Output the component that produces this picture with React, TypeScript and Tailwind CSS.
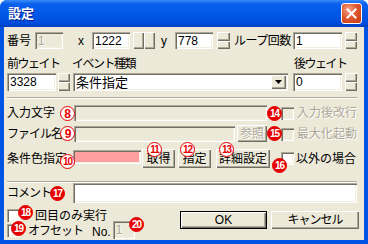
import React from 'react'

const FONT = "font-['Liberation_Sans','Noto_Sans_CJK_JP',sans-serif]"
const SUNKEN = 'shadow-[inset_1px_1px_0_#aca899,inset_2px_2px_0_#716f64,inset_-1px_-1px_0_#fff,inset_-2px_-2px_0_#f1efe2]'
const RAISED = 'shadow-[inset_1px_1px_0_#fff,inset_-1px_-1px_0_#716f64,inset_-2px_-2px_0_#aca899]'
const DIS = 'text-[#aca899] [text-shadow:1px_1px_0_#fff]'

function Num({ n, filled, className }: { n: number; filled?: boolean; className: string }) {
  return (
    <span
      className={`absolute z-10 flex items-center justify-center w-[15px] h-[15px] rounded-full border-[1.5px] border-[#e60000] font-bold leading-none ${
        n > 9 ? 'text-[10px] tracking-[-1px]' : 'text-[12px]'
      } ${filled ? 'bg-[#e60000] text-white' : 'bg-white text-[#e60000]'} ${className}`}
    >
      {n}
    </span>
  )
}

function Input({ value, disabled, className }: { value?: string; disabled?: boolean; className: string }) {
  return (
    <div className={`${SUNKEN} ${disabled ? `bg-[#ece9d8] ${DIS}` : 'bg-white'} flex items-center pl-[3px] ${className}`}>
      {value}
    </div>
  )
}

function VSpin({ className }: { className: string }) {
  return (
    <div className={`flex flex-col ${className}`}>
      <div className={`flex-1 bg-[#ece9d8] ${RAISED}`} />
      <div className={`flex-1 bg-[#ece9d8] ${RAISED}`} />
    </div>
  )
}

function Btn({ children, disabled, className }: { children: React.ReactNode; disabled?: boolean; className: string }) {
  return (
    <div className={`relative bg-[#ece9d8] ${RAISED} flex items-center justify-center ${disabled ? DIS : ''} ${className}`}>
      {children}
    </div>
  )
}

function Check({ disabled }: { disabled?: boolean }) {
  return <div className={`w-[13px] h-[13px] shrink-0 ${SUNKEN} ${disabled ? 'bg-[#ece9d8]' : 'bg-white'}`} />
}

export default function App() {
  return (
    <div className={`w-[368px] h-[244px] flex flex-col ${FONT} text-[12px] leading-none text-black bg-[#0054e3] rounded-t-[7px] overflow-hidden`}>
      <div className="h-[27px] shrink-0 flex items-center pl-[8px] pr-[6px] bg-[linear-gradient(180deg,#3a8df9_0%,#0b60ee_14%,#0056e6_55%,#004ddc_85%,#003fc4_100%)]">
        <span className="text-white font-bold text-[13px] [text-shadow:1px_1px_0_#0a1e8c]">設定</span>
        <div className="ml-auto w-[21px] h-[21px] rounded-[3px] border border-white bg-[radial-gradient(circle_at_35%_30%,#f4a58c_0%,#e0582f_45%,#c13a12_100%)] flex items-center justify-center">
          <svg width="11" height="11" viewBox="0 0 11 11">
            <path d="M1.5 1.5 L9.5 9.5 M9.5 1.5 L1.5 9.5" stroke="#fff" strokeWidth="2" strokeLinecap="square" />
          </svg>
        </div>
      </div>

      <div className="flex-1 mx-[4px] mb-[4px] bg-[#ece9d8] flex flex-col pl-[3px]">
        {/* row 1 */}
        <div className="mt-[5px] h-[17px] flex items-stretch">
          <span className="w-[28px] flex items-center">番号</span>
          <Input value="1" disabled className="w-[28px]" />
          <span className="w-[29px] pl-[15px] flex items-center">x</span>
          <Input value="1222" className="w-[38px]" />
          <div className="ml-[3px] w-[22px] flex">
            <div className={`flex-1 bg-[#ece9d8] ${RAISED}`} />
            <div className={`flex-1 bg-[#ece9d8] ${RAISED}`} />
          </div>
          <span className="w-[20px] pl-[6px] flex items-center">y</span>
          <Input value="778" className="w-[38px]" />
          <VSpin className="ml-[4px] w-[13px]" />
          <span className="ml-[4px] w-[59px] flex items-center tracking-[-0.5px]">ループ回数</span>
          <Input value="1" className="w-[49px]" />
          <VSpin className="ml-[3px] w-[12px]" />
        </div>

        {/* row 2 labels */}
        <div className="mt-[7px] h-[15px] flex items-center">
          <span className="w-[65px] tracking-[-1.5px]">前ウェイト</span>
          <span className="w-[222px] tracking-[-1.5px]">イベント種類</span>
          <span className="tracking-[-1.5px]">後ウェイト</span>
        </div>
        {/* row 2 inputs */}
        <div className="mt-[2px] h-[18px] flex items-stretch">
          <Input value="3328" className="w-[49px]" />
          <VSpin className="ml-[2px] w-[12px]" />
          <div className={`ml-[3px] w-[215px] bg-white ${SUNKEN} flex items-center pl-[3px] pr-[2px]`}>
            <span className="text-[13px]">条件指定</span>
            <div className={`ml-auto w-[15px] h-[14px] bg-[#ece9d8] ${RAISED} flex items-center justify-center`}>
              <svg width="7" height="4" viewBox="0 0 7 4">
                <path d="M0 0 H7 L3.5 4 Z" fill="#000" />
              </svg>
            </div>
          </div>
          <Input value="0" className="ml-[5px] w-[49px]" />
          <VSpin className="ml-[3px] w-[12px]" />
        </div>

        <div className="mt-[6px] w-[350px] h-[2px] border-t border-[#aca899] border-b border-b-white" />

        {/* 入力文字 */}
        <div className="mt-[6px] h-[16px] flex items-stretch">
          <span className="relative w-[67px] flex items-center">
            入力文字
            <Num n={8} className="left-[53px] top-[1px]" />
          </span>
          <Input disabled className="w-[193px]" />
          <div className="relative ml-[14px] flex items-center">
            <Num n={14} filled className="-left-[14px] top-[1px]" />
            <Check disabled />
            <span className={`ml-[3px] ${DIS}`}>入力後改行</span>
          </div>
        </div>

        {/* ファイル名 */}
        <div className="mt-[5px] h-[16px] flex items-stretch">
          <span className="relative w-[67px] flex items-center tracking-[-1px]">
            ファイル名
            <Num n={9} className="left-[53px] top-[0px]" />
          </span>
          <Input disabled className="w-[161px]" />
          <Btn disabled className="ml-[2px] w-[30px] -mt-[1px]">参照</Btn>
          <div className="relative ml-[14px] flex items-center">
            <Num n={15} filled className="-left-[14px] top-[0px]" />
            <Check disabled />
            <span className={`ml-[3px] ${DIS}`}>最大化起動</span>
          </div>
        </div>

        {/* 条件色指定 */}
        <div className="mt-[7px] h-[19px] flex items-start">
          <span className="relative w-[66px] h-[19px] flex items-center whitespace-nowrap">
            条件色指定
            <Num n={10} className="left-[53px] top-[5px]" />
          </span>
          <div className={`mt-[1px] w-[68px] h-[14px] bg-[#ff9f9f] ${SUNKEN}`} />
          <Btn className="ml-[1px] w-[33px] h-[19px]">
            取得
            <Num n={11} className="left-[5px] -top-[7px]" />
          </Btn>
          <Btn className="ml-[3px] w-[33px] h-[19px]">
            指定
            <Num n={12} className="left-[2px] -top-[7px]" />
          </Btn>
          <Btn className="ml-[5px] w-[54px] h-[19px]">
            詳細設定
            <Num n={13} className="left-[3px] -top-[7px]" />
          </Btn>
          <div className="relative ml-[11px] h-[19px] flex items-center">
            <Num n={16} filled className="-left-[9px] top-[9px]" />
            <Check />
            <span className="ml-[2px]">以外の場合</span>
          </div>
        </div>

        <div className="mt-[13px] w-[350px] h-[2px] border-t border-[#aca899] border-b border-b-white" />

        {/* コメント */}
        <div className="h-[20px] flex items-stretch">
          <span className="relative w-[66px] flex items-center tracking-[-1px]">
            コメント
            <Num n={17} filled className="left-[43px] top-[3px]" />
          </span>
          <Input className="w-[284px]" />
        </div>

        {/* bottom */}
        <div className="flex">
          <div className="w-[173px] flex flex-col">
            <div className="relative mt-[6px] h-[13px] flex items-center">
              <Check />
              <Num n={18} filled className="left-[11px] -top-[4px]" />
              <span className="ml-[15px]">回目のみ実行</span>
            </div>
            <div className="relative mt-[2px] h-[13px] flex items-center">
              <Check />
              <Num n={19} filled className="left-[4px] -top-[3px]" />
              <span className="ml-[8px] tracking-[-1px]">オフセット</span>
              <span className="ml-[9px] mt-[2px]">No.</span>
              <Input disabled value="1" className="relative ml-[2px] w-[22px] h-[18px] -mt-[2px]" />
              <Num n={20} filled className="left-[122px] -top-[7px]" />
            </div>
          </div>
          <div className="mt-[8px] w-[87px] h-[18px] bg-[#ece9d8] border border-black shadow-[inset_1px_1px_0_#fff,inset_-1px_-1px_0_#716f64,inset_-2px_-2px_0_#aca899] flex items-center justify-center">
            OK
          </div>
          <Btn className="mt-[8px] ml-[4px] w-[88px] h-[18px] tracking-[-1px]">キャンセル</Btn>
        </div>
      </div>
    </div>
  )
}
